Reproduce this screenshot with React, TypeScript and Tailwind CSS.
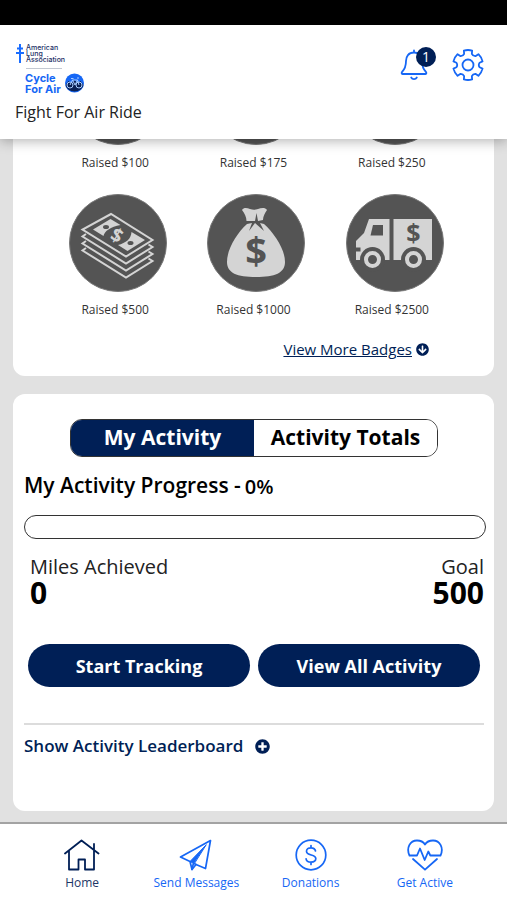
import React, { useState } from "react";
import { FaArrowCircleDown, FaPlusCircle } from "react-icons/fa";

const LIGHT = "#d4d4d4";
const DARK = "#545454";

function OrgLogo() {
  return (
    <svg width="72" height="54" viewBox="0 0 72 54" role="img" aria-label="American Lung Association Cycle For Air">
      <g stroke="#1a6dff" strokeWidth="2" fill="none">
        <path d="M5 3v19" />
        <path d="M2 7.500h6M1 12h8" />
      </g>
      <g fill="#1b2f66" fontFamily="Inter, sans-serif" fontSize="7" fontWeight="500">
        <text x="11" y="9">American</text>
        <text x="11" y="15">Lung</text>
        <text x="11" y="21">Association</text>
      </g>
      <path d="M11 27.500h36" stroke="#c3c8d2" strokeWidth="1" />
      <g fill="#1667f5" fontFamily="Inter, sans-serif" fontSize="11" fontWeight="700">
        <text x="10" y="41">Cycle</text>
        <text x="10" y="52">For Air</text>
      </g>
      <circle cx="59.500" cy="42" r="9.500" fill="#1667f5" />
      <path d="M50.500 44a9.500 9.500 0 0 0 18 0l-3-4-3 2-3-3-3 3-3-2z" fill="#0b2154" />
      <g fill="none" stroke="#a9ccff" strokeWidth="1">
        <circle cx="55" cy="44" r="3" />
        <circle cx="64" cy="44" r="3" />
        <path d="M55 44l2.500-5h5l1.500 5M57.500 39l2.500 5 2.500-5M56 37.500h2.500M62 37h2" />
      </g>
    </svg>
  );
}

function BellIcon() {
  return (
    <svg width="28" height="32" viewBox="0 0 28 32" fill="none" stroke="#1667f5" strokeWidth="1.800" strokeLinecap="round" strokeLinejoin="round">
      <path d="M14 1.500v2M14 3.500c-5.500 0-8 4-8 8.500 0 6-1.500 8.500-4 11-.8 1-.3 2 .8 2h22.400c1.100 0 1.600-1 .8-2-2.500-2.500-4-5-4-11 0-4.500-2.500-8.500-8-8.500z" />
      <path d="M11.200 28.500c1.200 2.200 4.400 2.200 5.600 0" />
    </svg>
  );
}

const gearPath = (() => {
  const at = (deg: number, r: number) => {
    const a = ((deg - 90) * Math.PI) / 180;
    return `${(16 + r * Math.cos(a)).toFixed(2)} ${(16 + r * Math.sin(a)).toFixed(2)}`;
  };
  let d = "";
  for (let i = 0; i < 6; i++) {
    const c = i * 60;
    d += `${i === 0 ? "M" : "L"}${at(c - 19, 11.8)}L${at(c - 16, 15)}A15 15 0 0 1 ${at(c + 16, 15)}L${at(c + 19, 11.8)}Q${at(c + 30, 10)} ${at(c + 41, 11.8)}`;
  }
  return d + "Z";
})();

function GearIcon() {
  return (
    <svg width="32" height="32" viewBox="0 0 32 32" fill="none" stroke="#1667f5" strokeWidth="1.800" strokeLinejoin="round">
      <path d={gearPath} />
      <circle cx="16" cy="16" r="5.500" />
    </svg>
  );
}

function Dollar({ x, y, size, fill, transform }: { x: number; y: number; size: number; fill: string; transform?: string }) {
  return (
    <text x={x} y={y} fontSize={size} fill={fill} fontWeight="700" textAnchor="middle" fontFamily="'Open Sans', sans-serif" transform={transform}>
      $
    </text>
  );
}

function CashArt() {
  return (
    <g>
      {[21, 14, 7].map((dy) => (
        <path key={dy} d="M17 33l-3.500 2.500 43.500 27 26.500-16.500-4-2.500" transform={`translate(0 ${dy})`} fill={DARK} stroke={LIGHT} strokeWidth="2" />
      ))}
      <path d="M42 20L13.500 35.500 57 62.500 83.500 46z" fill={DARK} stroke={LIGHT} strokeWidth="2" />
      <path d="M41.500 25L24 35.500l10.500 6.500c1-5 7-9 17-11z" fill={LIGHT} />
      <path d="M62.500 38L76 46 58.500 57 49 51c8-2 13-6 13.500-13z" fill={LIGHT} />
      <ellipse cx="37" cy="33" rx="3" ry="2" fill={DARK} />
      <ellipse cx="61.500" cy="49" rx="3" ry="2" fill={DARK} />
      <Dollar x={48} y={48} size={19} fill={LIGHT} transform="rotate(28 48 41)" />
    </g>
  );
}

function BagArt() {
  return (
    <g fill={LIGHT}>
      <path d="M35 16c2-3 5-2 8-1 3 1 5 1 8 0 3-1 7-2 9 1-2 3-4 6-4 10l-5 1-1.500-8L48 27h-8.500c0-4-2-8-4.500-11z" />
      <path d="M40 30l5-1-3 8 6-8 9 8-4-8 4 1c10 9 21 25 21 38 0 11-10 15-29 15s-29-4-29-15c0-13 10-29 20-38z" />
      <Dollar x={49} y={71} size={38} fill={DARK} />
    </g>
  );
}

function TruckArt() {
  return (
    <g>
      <path d="M23 25h20.500v41H10v-8.500h4.500v-4H10V47l8-8z" fill={LIGHT} />
      <path d="M47.500 25H86v41H47.500z" fill={LIGHT} />
      <path d="M27 31h10v10.500H24.500z" fill={DARK} />
      {[26.5, 67.5].map((cx) => (
        <g key={cx}>
          <circle cx={cx} cy="65.500" r="12.500" fill={DARK} />
          <circle cx={cx} cy="65.500" r="6.500" fill="none" stroke={LIGHT} strokeWidth="4" />
        </g>
      ))}
      <Dollar x={67.5} y={48} size={25} fill={DARK} />
    </g>
  );
}

const badges: { label: string; art?: React.ReactNode }[] = [
  { label: "Raised $100" },
  { label: "Raised $175" },
  { label: "Raised $250" },
  { label: "Raised $500", art: <CashArt /> },
  { label: "Raised $1000", art: <BagArt /> },
  { label: "Raised $2500", art: <TruckArt /> },
];

function Badge({ label, art }: { label: string; art?: React.ReactNode }) {
  return (
    <li className="flex flex-col items-center">
      <svg width="98" height="98" viewBox="0 0 98 98" aria-hidden="true" className="ml-1.5">
        <circle cx="49" cy="49" r="48.500" fill={DARK} stroke="#777777" strokeWidth="1" />
        {art}
      </svg>
      <span className="mt-2 text-xs leading-5 text-[#333333]">{label}</span>
    </li>
  );
}

function HomeIcon() {
  return (
    <svg width="36" height="32" viewBox="0 0 36 32" fill="none" stroke="#001f56" strokeWidth="1.800" strokeLinecap="round" strokeLinejoin="round">
      <path d="M1 14.500L17.500 1.500 34.500 14.500M30 11V5M5 12v18.500h9.500V20.500h6.500v10h9V11.500" />
    </svg>
  );
}

function SendIcon() {
  return (
    <svg width="36" height="32" viewBox="0 0 36 32" fill="none" stroke="#1667f5" strokeWidth="1.700" strokeLinecap="round" strokeLinejoin="round">
      <path d="M32.500 1.500L2.500 18l9.500 4.500L14 30.500l4-5 9.500 4z" />
      <path d="M28 6L12 22.500l4 2z" fill="#1667f5" strokeWidth="1" />
      <path d="M14 30.500l1.500-6.500 2.500 1.500" />
    </svg>
  );
}

function DonateIcon() {
  return (
    <svg width="36" height="32" viewBox="0 0 36 32" fill="none" stroke="#1667f5" strokeWidth="1.700" strokeLinecap="round" strokeLinejoin="round">
      <circle cx="18" cy="16" r="14.800" />
      <path d="M22.500 12c-.4-2.200-2-3.200-4.500-3.200-2.700 0-4.500 1.200-4.500 3.400 0 5 9.300 2.600 9.300 7.400 0 2.300-1.900 3.600-4.800 3.600s-4.600-1.200-4.900-3.400M18 6.500v2.300M18 23.200v2.300" />
    </svg>
  );
}

function HeartIcon() {
  return (
    <svg width="36" height="32" viewBox="0 0 36 32" fill="none" stroke="#1667f5" strokeWidth="1.800" strokeLinecap="round" strokeLinejoin="round">
      <path d="M2.500 16.500H10l3-7 4.700 11.500 3.600-8.500 2 4H33.500c3.500-7.500-.5-15-7.500-15-3.500 0-6.500 1.500-8 4-1.500-2.500-4.500-4-8-4-7 0-11 7.500-7.500 15z" />
      <path d="M6 20l12 10.700L30 20" />
    </svg>
  );
}

const navItems = [
  { label: "Home", icon: <HomeIcon />, color: "text-[#1d3666]" },
  { label: "Send Messages", icon: <SendIcon />, color: "text-[#1667f5]" },
  { label: "Donations", icon: <DonateIcon />, color: "text-[#1667f5]" },
  { label: "Get Active", icon: <HeartIcon />, color: "text-[#1667f5]" },
];

export default function App() {
  const [tab, setTab] = useState<"mine" | "totals">("mine");
  const tabStyle = (on: boolean) =>
    on ? "flex-1 bg-[#001f56] text-white" : "flex-1 bg-white text-black";

  return (
    <div className="flex h-screen flex-col bg-[#e1e1e1] font-['Open_Sans',sans-serif] text-black">
      <div className="h-[25px] shrink-0 bg-black" />
      <header className="relative z-10 shrink-0 bg-white px-[15px] pt-4 pb-[19px] shadow-[0_2px_12px_rgba(0,0,0,0.3)]">
        <div className="flex items-start justify-between">
          <OrgLogo />
          <div className="flex items-center gap-6 pt-2 pr-2">
            <button type="button" aria-label="Notifications" className="relative">
              <BellIcon />
              <span className="absolute -top-0.5 -right-2 flex size-5 items-center justify-center rounded-full bg-[#001f56] text-sm text-white">1</span>
            </button>
            <button type="button" aria-label="Settings">
              <GearIcon />
            </button>
          </div>
        </div>
        <h1 className="mt-[9px] text-base leading-4 text-[#222222]">Fight For Air Ride</h1>
      </header>

      <main className="flex min-h-0 flex-1 flex-col justify-end gap-[18px] overflow-hidden px-[13px] pb-[11px]">
        <section className="shrink-0 rounded-xl bg-white px-[33px] pt-6 pb-[15px]">
          <ul className="grid grid-cols-3 gap-y-[21px]">
            {badges.map((b) => (
              <Badge key={b.label} {...b} />
            ))}
          </ul>
          <div className="mt-[17px] flex justify-end pr-8">
            <a href="#badges" className="flex items-center gap-1 text-[15px] leading-6 text-[#001f56]">
              <span className="underline">View More Badges</span>
              <FaArrowCircleDown size={13} />
            </a>
          </div>
        </section>

        <section className="shrink-0 rounded-xl bg-white pt-[25px] pr-[10px] pb-[53px] pl-[11px]">
          <div className="mx-auto flex h-[38px] w-4/5 overflow-hidden rounded-xl border border-[#333333] text-[21px] font-bold">
            <button type="button" onClick={() => setTab("mine")} className={tabStyle(tab === "mine")}>My Activity</button>
            <button type="button" onClick={() => setTab("totals")} className={tabStyle(tab === "totals")}>Activity Totals</button>
          </div>
          <div className="mt-[14px] flex items-end gap-1">
            <h2 className="text-[21px] leading-7 font-semibold">My Activity Progress -</h2>
            <span className="text-xl leading-6 font-semibold">0%</span>
          </div>
          <div role="progressbar" aria-label="My activity progress" aria-valuenow={0} aria-valuemin={0} aria-valuemax={500} className="mt-4 -mr-0.5 h-6 rounded-full border border-[#333333]" />
          <div className="mt-4 flex justify-between pl-1.5">
            <div>
              <p className="text-xl leading-6 text-[#222222]">Miles Achieved</p>
              <p className="text-[30px] leading-7 font-bold">0</p>
            </div>
            <div className="text-right">
              <p className="text-xl leading-6 text-[#222222]">Goal</p>
              <p className="text-[30px] leading-7 font-bold">500</p>
            </div>
          </div>
          <div className="mt-[37px] flex gap-2 px-1 text-lg font-bold text-white">
            <button type="button" className="h-[43px] flex-1 rounded-full bg-[#001f56]">Start Tracking</button>
            <button type="button" className="h-[43px] flex-1 rounded-full bg-[#001f56]">View All Activity</button>
          </div>
          <hr className="mt-9 border-t-2 border-[#dcdcdc]" />
          <button type="button" className="mt-[9px] flex items-center gap-3 text-[17px] leading-6 font-semibold text-[#001f56]">
            Show Activity Leaderboard
            <FaPlusCircle size={15} />
          </button>
        </section>
      </main>

      <nav className="grid shrink-0 grid-cols-4 border-t-2 border-[#a3a3a3] bg-white px-[25px] pt-[15px] pb-[7px]">
        {navItems.map((n) => (
          <a key={n.label} href="#" className={n.color}>
            <span className="flex flex-col items-center gap-0.5 text-xs leading-5">
              {n.icon}
              <span>{n.label}</span>
            </span>
          </a>
        ))}
      </nav>
    </div>
  );
}
